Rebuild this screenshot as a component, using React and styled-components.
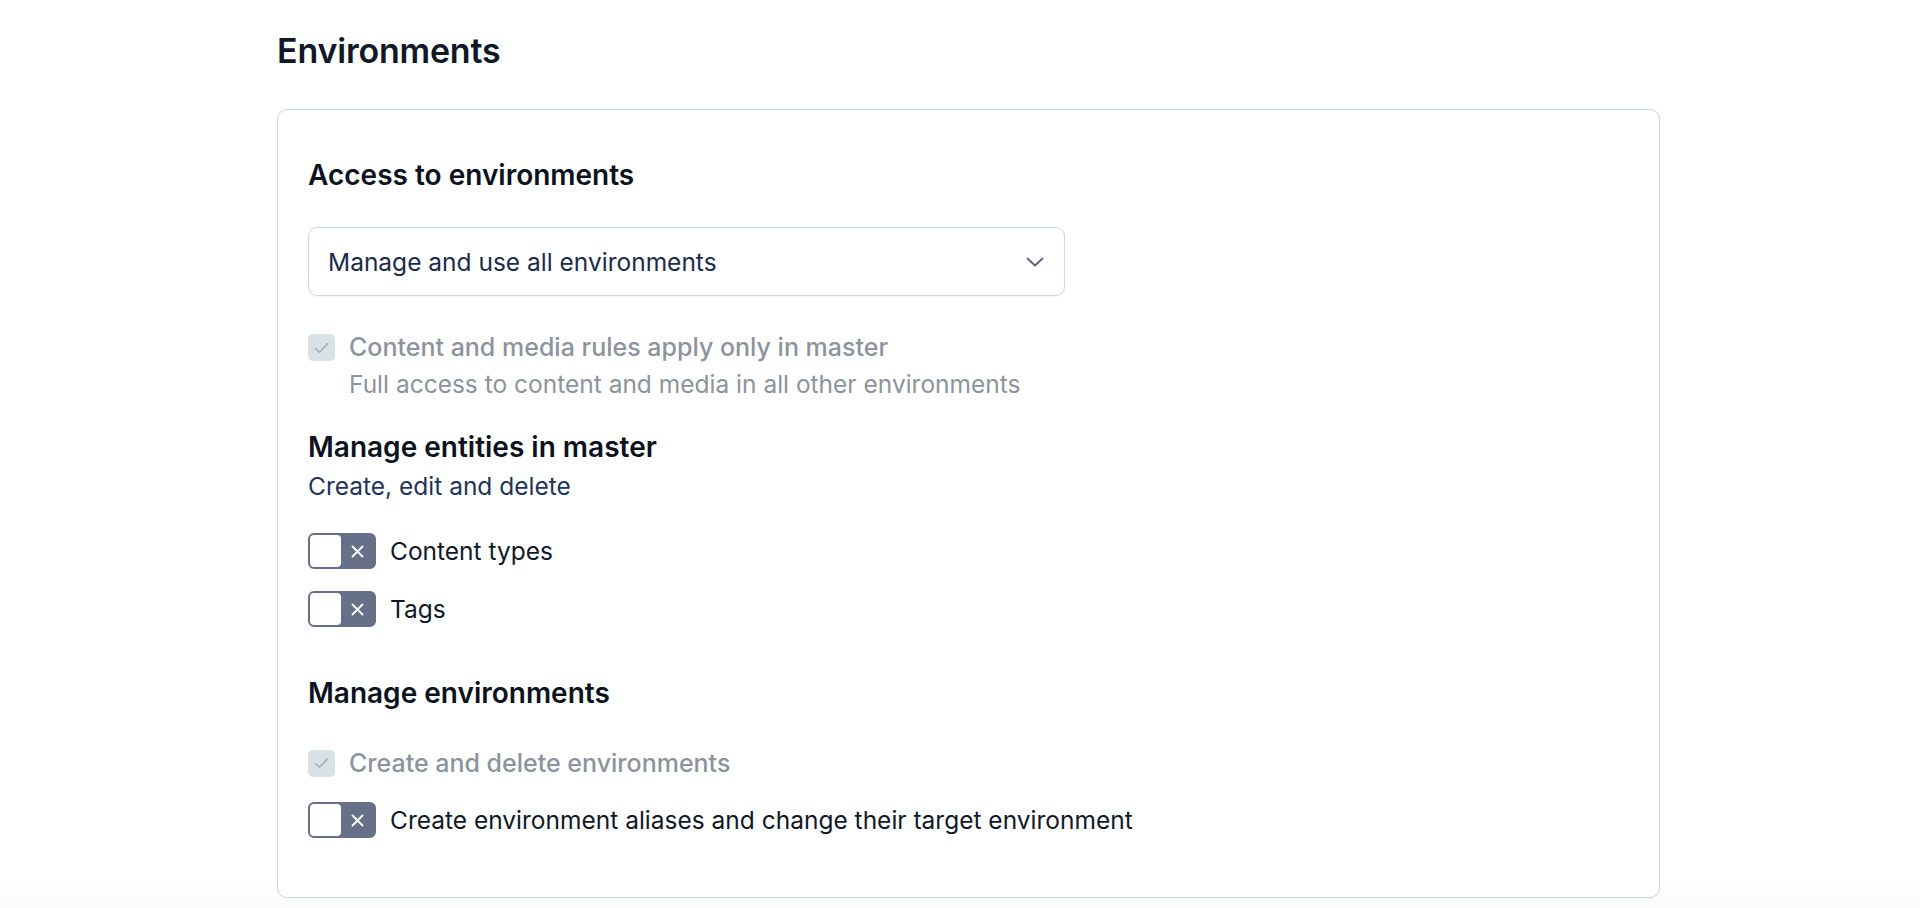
import React from "react";
import styled, { createGlobalStyle } from "styled-components";

const GlobalStyle = createGlobalStyle`
  html, body {
    margin: 0;
    padding: 0;
  }

  body {
    min-height: 100vh;
    font-family: Inter, "Noto Sans", "Liberation Sans", sans-serif;
    background: linear-gradient(to bottom, #fff calc(100% - 30px), #f9fafb 100%);
    color: #111827;
  }
`;

const Page = styled.div`
  padding: 31px 0 0 277px;
`;

const PageTitle = styled.h1`
  margin: 0 0 38px;
  font-size: 34px;
  line-height: 40px;
  font-weight: 600;
  color: #111827;
  letter-spacing: -0.2px;
`;

const Card = styled.section`
  width: 1383px;
  box-sizing: border-box;
  border: 1.5px solid #c9d5da;
  border-radius: 10px;
  padding: 48px 30px 59px;
  background: #fff;
`;

const SectionTitle = styled.h2`
  margin: ${(p) => p.$top || 0}px 0 0;
  font-size: 28px;
  line-height: 34px;
  font-weight: 600;
  color: #0c1220;
`;

const SectionHint = styled.div`
  margin-top: 6px;
  font-size: 24.5px;
  line-height: 32px;
  color: #1e3459;
`;

const Select = styled.div`
  margin-top: 35px;
  width: 757px;
  height: 69px;
  box-sizing: border-box;
  border: 1.5px solid #cfd9e0;
  border-radius: 9px;
  display: flex;
  align-items: center;
  justify-content: space-between;
  padding: 0 20px 0 19px;
  font-size: 24.5px;
  color: #1b2b4b;
  box-shadow: 0 1px 2px rgba(25, 37, 50, 0.05);
`;

const Row = styled.div`
  margin-top: ${(p) => p.$top || 0}px;
  display: flex;
  align-items: ${(p) => (p.$start ? "flex-start" : "center")};
  gap: 14px;
`;

const Box = styled.span`
  flex: none;
  width: 27px;
  height: 27px;
  border-radius: 5px;
  background: #d7e1e6;
  display: flex;
  align-items: center;
  justify-content: center;
  margin-top: ${(p) => (p.$offset ? "3px" : "0")};
`;

const TextCol = styled.div`
  display: flex;
  flex-direction: column;
`;

const Label = styled.span`
  font-size: ${(p) => (p.$muted ? "25px" : "24.5px")};
  line-height: 32px;
  color: ${(p) => (p.$muted ? "#8d939c" : "#111827")};
  font-weight: ${(p) => (p.$muted ? 500 : 400)};
`;

const Help = styled.span`
  margin-top: 5px;
  font-size: 24.5px;
  line-height: 32px;
  color: #8d939c;
`;

const Switch = styled.span`
  flex: none;
  width: 68px;
  height: 36px;
  box-sizing: border-box;
  border: 2px solid #667189;
  border-radius: 6px;
  background: #667189;
  display: flex;
  align-items: center;
`;

const Knob = styled.span`
  width: 31px;
  height: 32px;
  border-radius: 4px;
  background: #fff;
`;

const SwitchIcon = styled.span`
  flex: 1;
  display: flex;
  align-items: center;
  justify-content: center;
`;

const Chevron = () => (
  <svg width="18" height="10" viewBox="0 0 18 10" fill="none">
    <path d="M1.5 1.5 9 8.5l7.5-7" stroke="#56627a" strokeWidth="1.8" strokeLinecap="round" strokeLinejoin="round" />
  </svg>
);

const Check = () => (
  <svg width="15" height="12" viewBox="0 0 15 12" fill="none">
    <path d="M1.5 6.5 5.5 10.3 13.5 1.7" stroke="#a2adb7" strokeWidth="1.5" strokeLinecap="round" strokeLinejoin="round" />
  </svg>
);

const Cross = () => (
  <svg width="13" height="13" viewBox="0 0 13 13" fill="none">
    <path d="M1.5 1.5l10 10M11.5 1.5l-10 10" stroke="#fff" strokeWidth="1.8" strokeLinecap="round" />
  </svg>
);

const Toggle = ({ label, top }) => (
  <Row $top={top}>
    <Switch>
      <Knob />
      <SwitchIcon>
        <Cross />
      </SwitchIcon>
    </Switch>
    <Label>{label}</Label>
  </Row>
);

const App = () => {
  return (
    <>
      <GlobalStyle />
      <Page>
        <PageTitle>Environments</PageTitle>
        <Card>
          <SectionTitle>Access to environments</SectionTitle>
          <Select>
            <span>Manage and use all environments</span>
            <Chevron />
          </Select>

          <Row $top={35} $start>
            <Box $offset>
              <Check />
            </Box>
            <TextCol>
              <Label $muted>Content and media rules apply only in master</Label>
              <Help>Full access to content and media in all other environments</Help>
            </TextCol>
          </Row>

          <SectionTitle $top={30}>Manage entities in master</SectionTitle>
          <SectionHint>Create, edit and delete</SectionHint>
          <Toggle label="Content types" top={31} />
          <Toggle label="Tags" top={22} />

          <SectionTitle $top={49}>Manage environments</SectionTitle>
          <Row $top={37}>
            <Box>
              <Check />
            </Box>
            <Label $muted>Create and delete environments</Label>
          </Row>
          <Toggle label="Create environment aliases and change their target environment" top={23} />
        </Card>
      </Page>
    </>
  );
};

export default App;
